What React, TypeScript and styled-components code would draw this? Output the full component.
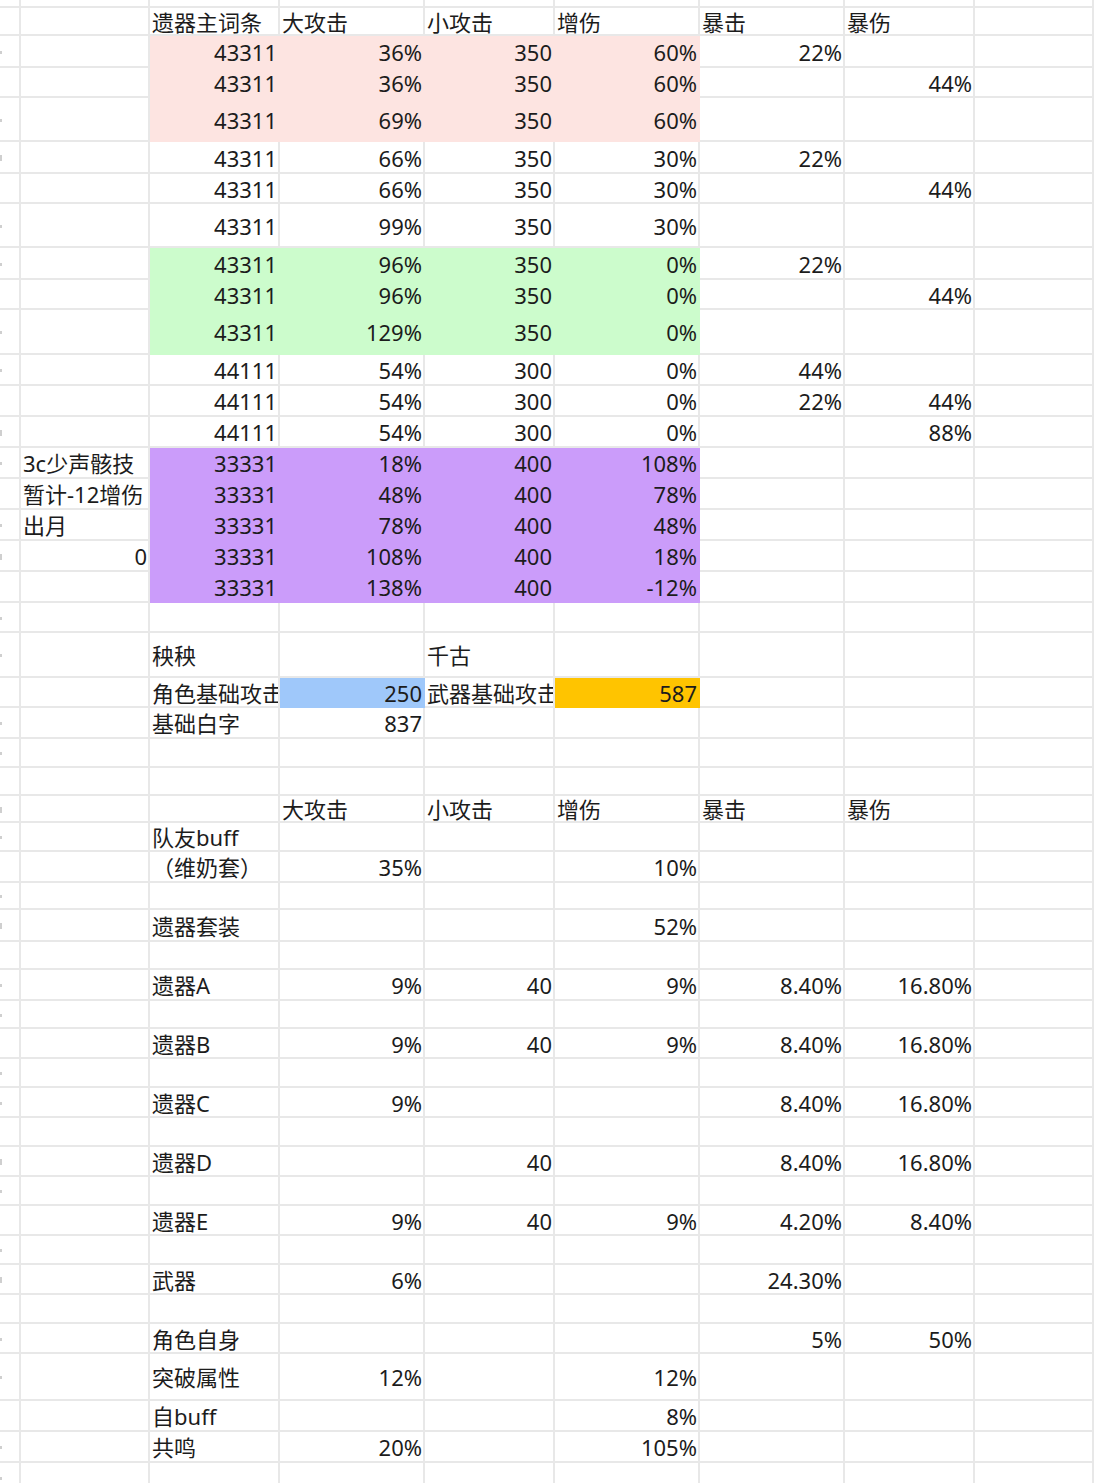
import React from "react";
import styled, { createGlobalStyle } from "styled-components";

const GlobalStyle = createGlobalStyle`
  html, body { margin: 0; padding: 0; background: #ffffff; }
  body { font-family: "Noto Sans", "Noto Sans CJK SC", sans-serif; }
`;

type Fill = "pink" | "green" | "purple" | "blue" | "gold";

const FILLS: Record<Fill, string> = {
  pink: "#fde4e1",
  green: "#ccfccc",
  purple: "#cb9cfa",
  blue: "#9fc8fa",
  gold: "#ffc400",
};

interface RowDef {
  h: number;
  v: string[];
  band?: Fill;
  extra?: Record<number, Fill>;
}

const R = (h: number, v: string[] = [], band?: Fill, extra?: Record<number, Fill>): RowDef => ({
  h,
  v,
  band,
  extra,
});

const ROWS: RowDef[] = [
  R(8),
  R(28, ["", "遗器主词条", "大攻击", "小攻击", "增伤", "暴击", "暴伤"]),
  R(32, ["", "43311", "36%", "350", "60%", "22%", ""], "pink"),
  R(30, ["", "43311", "36%", "350", "60%", "", "44%"], "pink"),
  R(44, ["", "43311", "69%", "350", "60%", "", ""], "pink"),
  R(32, ["", "43311", "66%", "350", "30%", "22%", ""]),
  R(30, ["", "43311", "66%", "350", "30%", "", "44%"]),
  R(44, ["", "43311", "99%", "350", "30%", "", ""]),
  R(32, ["", "43311", "96%", "350", "0%", "22%", ""], "green"),
  R(30, ["", "43311", "96%", "350", "0%", "", "44%"], "green"),
  R(45, ["", "43311", "129%", "350", "0%", "", ""], "green"),
  R(31, ["", "44111", "54%", "300", "0%", "44%", ""]),
  R(31, ["", "44111", "54%", "300", "0%", "22%", "44%"]),
  R(31, ["", "44111", "54%", "300", "0%", "", "88%"]),
  R(31, ["3c少声骸技", "33331", "18%", "400", "108%"], "purple"),
  R(31, ["暂计-12增伤", "33331", "48%", "400", "78%"], "purple"),
  R(31, ["出月", "33331", "78%", "400", "48%"], "purple"),
  R(31, ["0", "33331", "108%", "400", "18%"], "purple"),
  R(31, ["", "33331", "138%", "400", "-12%"], "purple"),
  R(30),
  R(45, ["", "秧秧", "", "千古"]),
  R(30, ["", "角色基础攻击", "250", "武器基础攻击", "587"], undefined, { 2: "blue", 4: "gold" }),
  R(31, ["", "基础白字", "837"]),
  R(29),
  R(28),
  R(27, ["", "", "大攻击", "小攻击", "增伤", "暴击", "暴伤"]),
  R(29, ["", "队友buff"]),
  R(31, ["", "（维奶套）", "35%", "", "10%"]),
  R(27),
  R(32, ["", "遗器套装", "", "", "52%"]),
  R(28),
  R(31, ["", "遗器A", "9%", "40", "9%", "8.40%", "16.80%"]),
  R(28),
  R(30, ["", "遗器B", "9%", "40", "9%", "8.40%", "16.80%"]),
  R(29),
  R(30, ["", "遗器C", "9%", "", "", "8.40%", "16.80%"]),
  R(29),
  R(30, ["", "遗器D", "", "40", "", "8.40%", "16.80%"]),
  R(29),
  R(30, ["", "遗器E", "9%", "40", "9%", "4.20%", "8.40%"]),
  R(29),
  R(30, ["", "武器", "6%", "", "", "24.30%"]),
  R(29),
  R(30, ["", "角色自身", "", "", "", "5%", "50%"]),
  R(47, ["", "突破属性", "12%", "", "12%"]),
  R(31, ["", "自buff", "", "", "8%"]),
  R(31, ["", "共鸣", "20%", "", "105%"]),
  R(30),
];

const Sheet = styled.div`
  width: 1094px;
  height: 1483px;
  overflow: hidden;
  background: #ffffff;
  font-family: "Noto Sans", "Noto Sans CJK SC", sans-serif;
  font-size: 22px;
  color: #1c1c1c;
`;

const Row = styled.div<{ $h: number }>`
  display: grid;
  grid-template-columns: 21px 129px 130px 145px 130px 145px 145px 130px 1fr;
  height: ${(p) => p.$h}px;
`;

const GRID = "#e8e8e8";

const RowHead = styled.div`
  box-sizing: border-box;
  display: flex;
  align-items: center;
  justify-content: flex-start;
  padding-top: 2px;
  border-right: 2px solid ${GRID};
  border-bottom: 2px solid ${GRID};
`;

/* the cut-off tail of a row number at the sheet's left edge */
const HeadMark = styled.span<{ $tall?: boolean }>`
  display: block;
  width: 2px;
  height: ${(p) => (p.$tall ? 6 : 3)}px;
  background: #cfcfcf;
`;

const Cell = styled.div<{ $fill?: string; $num?: boolean }>`
  box-sizing: border-box;
  display: flex;
  align-items: center;
  justify-content: ${(p) => (p.$num ? "flex-end" : "flex-start")};
  padding: 1px 1px 0 2px;
  border-right: 2px solid ${(p) => p.$fill ?? GRID};
  border-bottom: 2px solid ${(p) => p.$fill ?? GRID};
  background: ${(p) => p.$fill ?? "#ffffff"};
  overflow-x: clip;
  overflow-y: visible;
  white-space: nowrap;
  line-height: 1;
`;

const isNum = (s: string) => /^-?[\d.]+%?$/.test(s);

export default function App() {
  return (
    <>
      <GlobalStyle />
      <Sheet>
        {ROWS.map((row, ri) => (
          <Row key={ri} $h={row.h}>
            <RowHead>{ri > 1 && ri % 3 !== 0 ? <HeadMark $tall={ri % 4 === 1} /> : null}</RowHead>
            {Array.from({ length: 8 }).map((_, ci) => {
              const val = row.v[ci] ?? "";
              let fill: string | undefined;
              if (row.band && ci >= 1 && ci <= 4) fill = FILLS[row.band];
              if (row.extra && row.extra[ci]) fill = FILLS[row.extra[ci]];
              return (
                <Cell key={ci} $fill={fill} $num={isNum(val)}>
                  {val}
                </Cell>
              );
            })}
          </Row>
        ))}
      </Sheet>
    </>
  );
}
